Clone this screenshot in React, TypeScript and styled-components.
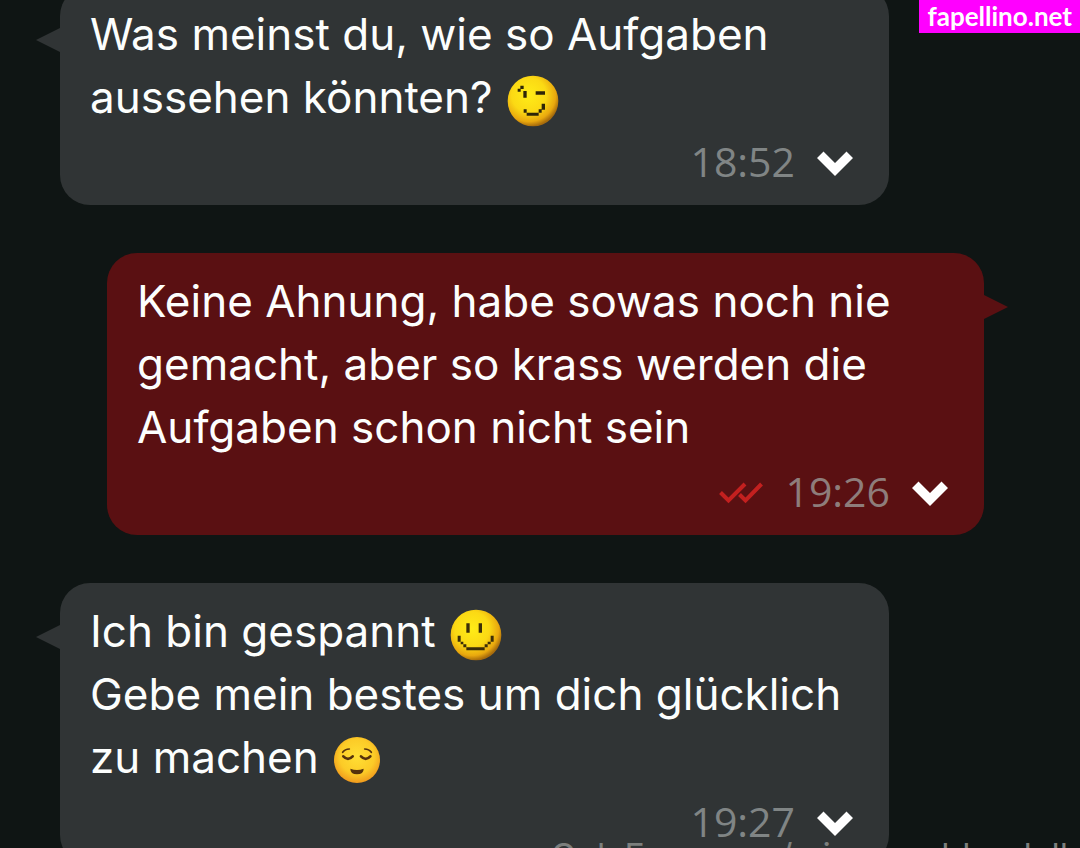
import React from "react";
import styled, { createGlobalStyle } from "styled-components";

const GlobalStyle = createGlobalStyle`
  *, *::before, *::after { box-sizing: border-box; }
  body { margin: 0; background: #0f1514; font-family: Inter, "Open Sans", sans-serif; }
`;

const Screen = styled.main`
  position: relative;
  height: 100vh;
  overflow: hidden;
  background: #0f1514;
`;

const Conversation = styled.div`
  display: flex;
  flex-direction: column;
  gap: 48px;
  margin-top: -14px;
  padding: 0 96px 0 60px;
`;

const Bubble = styled.article<{ $own?: boolean }>`
  position: relative;
  flex: none;
  margin: ${(p) => (p.$own ? "0 0 0 47px" : "0 95px 0 0")};
  padding: 17px 36px 12px 30px;
  border-radius: 30px;
  background: ${(p) => (p.$own ? "#5a1012" : "#303435")};

  &::before {
    content: "";
    position: absolute;
    top: 42px;
    ${(p) => (p.$own ? "left: 100%;" : "right: 100%;")}
    border: 12px solid transparent;
    ${(p) =>
      p.$own
        ? "border-left: 24px solid #5a1012; border-right: 0;"
        : "border-right: 24px solid #303435; border-left: 0;"}
  }
`;

const Text = styled.p`
  margin: 0;
  font-size: 44px;
  line-height: 63px;
  color: #fcfefd;
  white-space: nowrap;

  svg {
    margin-left: 2px;
    vertical-align: middle;
  }
`;

const Meta = styled.footer`
  display: flex;
  align-items: center;
  justify-content: flex-end;
  gap: 22px;
  height: 64px;
`;

const Time = styled.time<{ $own?: boolean }>`
  font-family: "Open Sans", sans-serif;
  font-size: 41px;
  line-height: 64px;
  color: ${(p) => (p.$own ? "#8e7d7b" : "#808585")};
`;

const MenuButton = styled.button`
  display: flex;
  margin: 6px 0 0;
  padding: 0;
  border: 0;
  background: none;
  cursor: pointer;
`;

const SiteTag = styled.a`
  position: absolute;
  top: 0;
  right: 0;
  padding: 0 8px;
  background: #ff00ff;
  color: #fff;
  font-family: Lato, sans-serif;
  font-size: 26px;
  font-weight: 700;
  line-height: 33px;
  text-decoration: none;
`;

const Credit = styled.div`
  position: absolute;
  right: 12px;
  bottom: -28px;
  color: #7c7f7d;
  font-size: 34px;
  line-height: 40px;
  white-space: nowrap;
`;

const Chevron = () => (
  <svg width="36" height="26" viewBox="0 0 36 26" aria-hidden="true">
    <path d="M6.5 0.5 18 12 29.5 0.5 36 7 18 25 0 7Z" fill="#fff" />
  </svg>
);

const ReadTicks = () => (
  <svg width="44" height="26" viewBox="0 -4 44 26" role="img" aria-label="Gelesen">
    <g fill="none" stroke="#c3201f" strokeWidth="4">
      <path d="M1.5 10.5 9.5 18.5 26 2" />
      <path d="M20.5 12.5 26.5 18.5 42.5 2" />
    </g>
  </svg>
);

const Gold = ({ id }: { id: string }) => (
  <radialGradient id={id} cx="0.42" cy="0.38" r="0.62">
    <stop offset="0" stopColor="#ffec17" />
    <stop offset="0.55" stopColor="#fbd914" />
    <stop offset="0.85" stopColor="#e9a80e" />
    <stop offset="1" stopColor="#a86c0c" />
  </radialGradient>
);

const Wink = () => (
  <svg width="52" height="52" viewBox="58 50 156 156" role="img" aria-label="Zwinkern">
    <defs><Gold id="wink" /></defs>
    <circle cx="136" cy="128" r="76" fill="url(#wink)" />
    <path
      fill="#2e2508"
      d="M90 91h9v9h-9zM98 82h10v10h-10zM107 98h10v20h-10zM144 99h28v10h-28zM108 153h9v10h-9zM117 163h36v9h-36zM153 153h9v10h-9zM162 136h10v18h-10z"
    />
  </svg>
);

const Smile = () => (
  <svg width="52" height="52" viewBox="58 59 156 156" role="img" aria-label="Lächeln">
    <defs><Gold id="smile" /></defs>
    <circle cx="136" cy="137" r="76" fill="url(#smile)" />
    <path
      fill="#3b2d08"
      d="M107 102h10v28h-10zM144 102h10v28h-10zM81 139h9v18h-9zM90 157h8v8h-8zM98 165h9v9h-9zM107 174h55v9h-55zM162 165h9v9h-9zM171 157h9v8h-9zM180 139h9v18h-9z"
    />
  </svg>
);

const Relieved = () => (
  <svg width="48" height="48" viewBox="67 44 144 144" role="img" aria-label="Erleichtert">
    <defs>
      <radialGradient id="relieved" cx="0.5" cy="0.42" r="0.58">
        <stop offset="0" stopColor="#ffdf35" />
        <stop offset="0.65" stopColor="#fccb27" />
        <stop offset="1" stopColor="#f09a1d" />
      </radialGradient>
    </defs>
    <circle cx="139" cy="113" r="69" fill="url(#relieved)" />
    <g fill="none" stroke="#56320c" strokeLinecap="round">
      <path d="M96 90q7-10 20-10M162 80q13 0 20 10" strokeWidth="5" />
      <path d="M98 102q14 15 28 0M151 102q14 15 28 0" strokeWidth="8" />
    </g>
    <path d="M119 139q20 8 40 0q0 17-20 17t-20-17z" fill="#56320c" />
  </svg>
);

type MessageProps = {
  own?: boolean;
  time: string;
  children: React.ReactNode;
};

const Message = ({ own, time, children }: MessageProps) => (
  <Bubble $own={own}>
    <Text>{children}</Text>
    <Meta>
      {own && <ReadTicks />}
      <Time $own={own}>{time}</Time>
      <MenuButton type="button" aria-label="Nachrichtenmenü">
        <Chevron />
      </MenuButton>
    </Meta>
  </Bubble>
);

export default function App() {
  return (
    <Screen>
      <GlobalStyle />
      <Conversation>
        <Message time="18:52">
          Was meinst du, wie so Aufgaben
          <br />
          aussehen könnten? <Wink />
        </Message>
        <Message own time="19:26">
          Keine Ahnung, habe sowas noch nie
          <br />
          gemacht, aber so krass werden die
          <br />
          Aufgaben schon nicht sein
        </Message>
        <Message time="19:27">
          Ich bin gespannt <Smile />
          <br />
          Gebe mein bestes um dich glücklich
          <br />
          zu machen <Relieved />
        </Message>
      </Conversation>
      <Credit>OnlyFans.com/misssexyblondell</Credit>
      <SiteTag href="#">fapellino.net</SiteTag>
    </Screen>
  );
}
